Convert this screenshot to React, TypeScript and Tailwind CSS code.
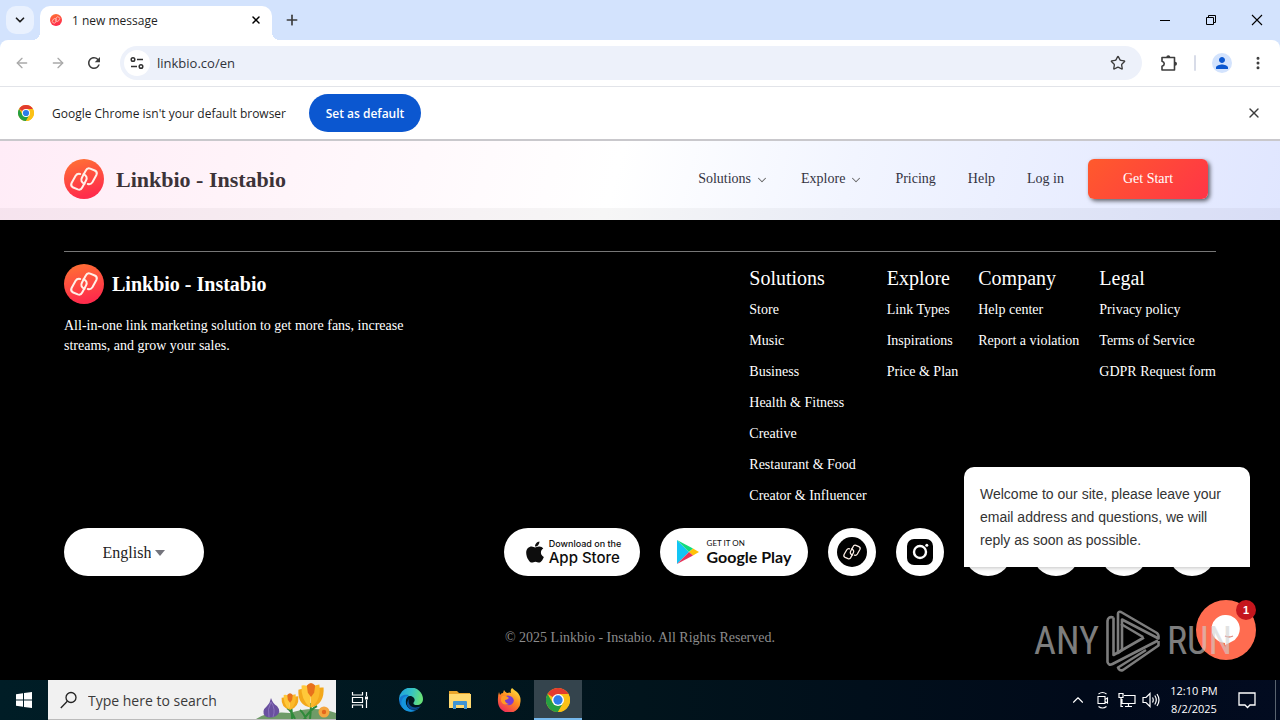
import React from "react";
import { ArrowLeft, ArrowRight, ChevronDown, ChevronUp, EllipsisVertical, Plus, Star, X } from "lucide-react";
import { FaApple } from "react-icons/fa";
import { MdPerson, MdRefresh } from "react-icons/md";

const UI = "font-['Open_Sans','Noto_Sans',sans-serif]";
const SERIF = "font-['Liberation_Serif',serif]";

function LinkGlyph() {
  const half = "M20.500 24.800Q15.800 22.500 18 18.500L21.800 11.500Q23.200 8.600 26.200 9.600L30.800 11.500Q33.800 13 32.400 16L28.400 23.200Q26.800 25.800 23.800 25";
  return (
    <g fill="none" stroke="#fff0e8" strokeWidth="2" strokeLinecap="round" strokeLinejoin="round">
      <path d={half} />
      <path d={half} transform="rotate(180 20 20)" />
    </g>
  );
}

function LinkLogo({ className, id }: { className: string; id: string }) {
  return (
    <svg viewBox="0 0 40 40" className={className} aria-hidden="true">
      <defs>
        <linearGradient id={id} x1="0" y1="0" x2="0.25" y2="1">
          <stop offset="0" stopColor="#ff7433" />
          <stop offset="1" stopColor="#ff2c4b" />
        </linearGradient>
      </defs>
      <circle cx="20" cy="20" r="20" fill={`url(#${id})`} />
      <LinkGlyph />
    </svg>
  );
}

function ChromeLogo({ className }: { className: string }) {
  return (
    <svg viewBox="0 0 48 48" className={className} aria-hidden="true">
      <circle cx="24" cy="24" r="24" fill="#fbc116" />
      <path d="M24 24 3.200 12A24 24 0 0 1 44.800 12H24z" fill="#e33b2e" />
      <path d="M3.200 12A24 24 0 0 0 24 48L34.400 30 24 24 13.600 30z" fill="#269f42" />
      <path d="M24 48A24 24 0 0 0 44.800 12H24l10.400 18z" fill="#fbc116" />
      <circle cx="24" cy="24" r="12" fill="#fff" />
      <circle cx="24" cy="24" r="9.300" fill="#2d7de9" />
    </svg>
  );
}

function TabStrip() {
  return (
    <div className="flex h-10 items-end bg-[#d3e3fd]">
      <button aria-label="Search tabs" className="mb-1.5 ml-1.5 flex size-7 items-center justify-center rounded-[10px] bg-[#e9f1fe]">
        <ChevronDown className="size-3.5 text-[#1f1f1f]" strokeWidth={3} />
      </button>
      <div className="relative ml-1.5 flex h-[34px] w-[232px] items-center rounded-t-[10px] bg-white px-2.5">
        <span className="absolute bottom-0 -left-2 size-2 bg-[radial-gradient(circle_at_0_0,transparent_8px,white_8px)]" />
        <span className="absolute -right-2 bottom-0 size-2 bg-[radial-gradient(circle_at_100%_0,transparent_8px,white_8px)]" />
        <LinkLogo id="tabIcon" className="mb-1.5 size-3" />
        <span className="ml-2.5 flex-1 pb-1 text-[12px] text-[#1f1f1f]">1 new message</span>
        <button aria-label="Close tab" className="mb-1.5">
          <X className="size-3" strokeWidth={3} />
        </button>
      </div>
      <button aria-label="New tab" className="mb-3 ml-3">
        <Plus className="size-4 text-[#3c3c3c]" strokeWidth={2.5} />
      </button>
      <div className="ml-auto flex h-full items-center gap-[30px] pr-[15px]">
        <button aria-label="Minimize">
          <svg viewBox="0 0 16 16" className="size-4" fill="none" stroke="#000">
            <path d="M3 8.500h10" />
          </svg>
        </button>
        <button aria-label="Restore">
          <svg viewBox="0 0 16 16" className="size-4" fill="none" stroke="#000">
            <path d="M3.500 5.500h7v7h-7zM5.500 5.500v-2h7v7h-2" />
          </svg>
        </button>
        <button aria-label="Close">
          <svg viewBox="0 0 16 16" className="size-4" fill="none" stroke="#000" strokeWidth="1.100">
            <path d="M3 3l10 10M13 3L3 13" />
          </svg>
        </button>
      </div>
    </div>
  );
}

function Toolbar() {
  return (
    <div className="bg-[#d3e3fd]">
      <div className="flex h-[47px] items-center rounded-t-[8px] border-b border-[#e2e4e9] bg-white px-3.5">
        <button aria-label="Back">
          <ArrowLeft className="size-4 text-[#a9a9a9]" />
        </button>
        <button aria-label="Forward" className="ml-5">
          <ArrowRight className="size-4 text-[#a9a9a9]" />
        </button>
        <button aria-label="Reload" className="ml-[19px]">
          <MdRefresh className="size-[18px] text-[#3c3c3c]" />
        </button>
        <div className="ml-[17px] flex h-[34px] flex-1 items-center rounded-full bg-[#edf1fa] pr-4 pl-1">
          <button aria-label="Site information" className="flex size-[26px] items-center justify-center rounded-full bg-white">
            <svg viewBox="0 0 16 16" className="size-4" fill="none" stroke="#303030" strokeWidth="1.500">
              <circle cx="4" cy="4.500" r="1.800" />
              <path d="M8 4.500h6M2 11.500h6" />
              <circle cx="12" cy="11.500" r="1.800" />
            </svg>
          </button>
          <input
            aria-label="Address"
            defaultValue="linkbio.co/en"
            className="ml-[7px] min-w-0 flex-1 bg-transparent pt-0.5 text-[13px] text-[#30333a] outline-none"
          />
          <button aria-label="Bookmark">
            <Star className="size-4 text-[#3c3c3c]" />
          </button>
        </div>
        <button aria-label="Extensions" className="ml-[17px]">
          <svg viewBox="0 0 20 20" className="size-5" aria-hidden="true">
            <path
              d="M3 4.500h12.500V17H3v-3.800c3-.800 3-4.100 0-4.900z"
              fill="none"
              stroke="#3c3c3c"
              strokeWidth="1.600"
              strokeLinejoin="round"
            />
            <path d="M7.300 4.200a2 2 0 0 1 4 0zM16 8.700a2 2 0 0 1 0 4z" fill="#3c3c3c" />
          </svg>
        </button>
        <span className="ml-[15px] h-4 w-0.5 rounded bg-[#d8dce8]" />
        <button aria-label="Profile" className="ml-4 flex size-5 items-center justify-center rounded-full bg-[#d3e3fd]">
          <MdPerson className="size-[18px] text-[#0b57d0]" />
        </button>
        <button aria-label="Menu" className="ml-[18px]">
          <EllipsisVertical className="size-4 text-[#3c3c3c]" strokeWidth={2.5} />
        </button>
      </div>
    </div>
  );
}

function DefaultBrowserBar() {
  return (
    <div className="flex h-[52px] items-center bg-white px-[18px] text-[12px] text-[#1f1f1f]">
      <ChromeLogo className="size-4" />
      <span className="ml-[18px] w-[241px] pt-0.5">Google Chrome isn't your default browser</span>
      <button className="ml-4 h-[38px] w-28 rounded-full bg-[#0b57d0] pt-0.5 font-semibold text-white">Set as default</button>
      <button aria-label="Dismiss" className="ml-auto">
        <X className="size-4 text-[#3c3c3c]" />
      </button>
    </div>
  );
}

function SiteHeader() {
  return (
    <header
      className={`flex h-[81px] flex-col border-t-2 border-[#c9c8cc] bg-[linear-gradient(105deg,#ffecf7_0%,#fff3f9_18%,#ffffff_48%,#f2f5ff_66%,#e0e6ff_100%)] ${SERIF}`}
    >
      <div className="flex flex-1 items-center px-16 pt-2">
        <a href="#home" className="flex items-center gap-3">
          <LinkLogo id="headLogo" className="size-10" />
          <span className="pt-0.5 text-[22px] font-bold text-[#3c3338]">Linkbio - Instabio</span>
        </a>
        <div className="ml-auto flex items-center gap-6">
          <nav className="flex items-center gap-8 text-[14px] text-[#33333f]">
            <a href="#solutions" className="flex items-center gap-1">
              Solutions <ChevronDown className="mt-0.5 size-3.5 text-[#666]" strokeWidth={1.75} />
            </a>
            <a href="#explore" className="flex items-center gap-1">
              Explore <ChevronDown className="mt-0.5 size-3.5 text-[#666]" strokeWidth={1.75} />
            </a>
            <a href="#pricing">Pricing</a>
            <a href="#help">Help</a>
            <a href="#login">Log in</a>
          </nav>
          <button className="mr-2 h-10 w-[120px] rounded-md bg-[linear-gradient(135deg,#ff5a2c,#ff3547)] text-[14px] text-white shadow-[2px_2px_4px_#00000099]">
            Get Start
          </button>
        </div>
      </div>
      <div className="h-3 bg-[#00000009]" />
    </header>
  );
}

const columns = [
  {
    title: "Solutions",
    links: ["Store", "Music", "Business", "Health & Fitness", "Creative", "Restaurant & Food", "Creator & Influencer"],
  },
  { title: "Explore", links: ["Link Types", "Inspirations", "Price & Plan"] },
  { title: "Company", links: ["Help center", "Report a violation"] },
  { title: "Legal", links: ["Privacy policy", "Terms of Service", "GDPR Request form"] },
];

function SiteFooter() {
  return (
    <footer className={`flex-1 bg-black px-16 pt-[31px] text-white ${SERIF}`}>
      <div className="flex justify-between border-t border-[#777] pt-3">
        <div className="w-[360px]">
          <div className="flex items-center gap-2">
            <LinkLogo id="footLogo" className="size-10" />
            <span className="text-[20px] font-bold">Linkbio - Instabio</span>
          </div>
          <p className="mt-3 text-[14px] leading-5">
            All-in-one link marketing solution to get more fans, increase streams, and grow your sales.
          </p>
        </div>
        <div className="flex gap-5">
          {columns.map((c) => (
            <section key={c.title}>
              <h2 className="text-[20px] leading-7">{c.title}</h2>
              <ul className="mt-2 flex flex-col gap-[11px] text-[14px] leading-5">
                {c.links.map((l) => (
                  <li key={l}>
                    <a href="#footer">{l}</a>
                  </li>
                ))}
              </ul>
            </section>
          ))}
        </div>
      </div>
      <div className="mt-[22px] flex items-center justify-between">
        <label className="flex h-12 w-[140px] items-center justify-center gap-1 rounded-full bg-white pt-0.5 text-[16px] text-[#222]">
          <select aria-label="Language" className="field-sizing-content appearance-none bg-transparent outline-none">
            <option>English</option>
          </select>
          <svg viewBox="0 0 10 6" className="h-1.5 w-2.5" fill="#74747c" aria-hidden="true">
            <path d="M0 0h10L5 6z" />
          </svg>
        </label>
        <div className="flex gap-5 text-[#0d0d0d]">
          <a href="#appstore" className="flex h-12 w-[136px] items-center justify-center gap-0.5 rounded-full bg-white font-['Inter',sans-serif]">
            <FaApple className="size-6" />
            <span className="flex flex-col">
              <span className="text-[9px] leading-[11px] font-medium">Download on the</span>
              <span className="text-[15px] leading-[18px] font-medium">App Store</span>
            </span>
          </a>
          <a href="#googleplay" className="flex h-12 w-[148px] items-center justify-center gap-2 rounded-full bg-white font-['Lato',sans-serif]">
            <svg viewBox="0 0 22 24" className="h-6 w-[22px]" aria-hidden="true">
              <path d="M0 0v24L12 12z" fill="#12c5f5" />
              <path d="M0 0l16 8.500L12 12z" fill="#12dc7c" />
              <path d="M16 8.500l6 3.500-6 3.500L12 12z" fill="#ffc107" />
              <path d="M12 12l4 3.500L0 24z" fill="#e8345a" />
            </svg>
            <span className="flex flex-col">
              <span className="text-[8px] leading-[10px]">GET IT ON</span>
              <span className="text-[16px] leading-[18px] font-bold">Google Play</span>
            </span>
          </a>
          <a href="#linkbio" aria-label="Linkbio" className="flex size-12 items-center justify-center rounded-full bg-white">
            <svg viewBox="0 0 40 40" className="size-[30px]">
              <circle cx="20" cy="20" r="20" />
              <g transform="translate(3 3) scale(0.85)">
                <LinkGlyph />
              </g>
            </svg>
          </a>
          <a href="#instagram" aria-label="Instagram" className="flex size-12 items-center justify-center rounded-full bg-white">
            <svg viewBox="0 0 26 26" className="size-[26px]">
              <rect width="26" height="26" rx="7" />
              <circle cx="13" cy="13" r="6" fill="none" stroke="#fff" strokeWidth="2.400" />
              <circle cx="19.800" cy="6.300" r="1.500" fill="#fff" />
            </svg>
          </a>
          {["Facebook", "X", "YouTube", "TikTok"].map((n) => (
            <a key={n} href="#social" aria-label={n} className="size-12 rounded-full bg-white" />
          ))}
        </div>
      </div>
      <p className="mt-[52px] pb-7 text-center text-[14px] leading-5 text-[#8c8c8c]">© 2025 Linkbio - Instabio. All Rights Reserved.</p>
    </footer>
  );
}

function ChatWidget() {
  return (
    <>
      <div className="absolute right-[30px] bottom-[113px] h-[100px] w-[286px] rounded-t-[10px] bg-white px-4 pt-4 font-['Liberation_Sans',sans-serif] text-[14px] leading-[23px] text-[#333] shadow-[0_1px_4px_#00000040]">
        Welcome to our site, please leave your email address and questions, we will reply as soon as possible.
      </div>
      <button aria-label="Open chat" className="absolute right-6 bottom-5 flex size-[60px] items-center justify-center rounded-full bg-[#ff6c50]">
        <svg viewBox="0 0 28 30" className="h-[30px] w-7">
          <path d="M14 0a14 14 0 0 1 5 27l-6 3v-2A14 14 0 0 1 14 0z" fill="#fff" />
          <path d="M13 21q4 2 8 0" fill="none" stroke="#e08a80" strokeWidth="1.300" />
        </svg>
        <span className="absolute top-0 right-0 flex size-5 items-center justify-center rounded-full bg-[#c5161d] font-['Liberation_Sans',sans-serif] text-[11px] font-bold text-white">
          1
        </span>
      </button>
    </>
  );
}

function Watermark() {
  return (
    <div className="pointer-events-none absolute right-12 bottom-2 flex items-center gap-1.5 font-['Roboto_Condensed','Roboto',sans-serif] text-[38px] leading-[62px] text-[#d0d0d0] opacity-60">
      <span>ANY</span>
      <svg viewBox="0 0 56 62" className="h-[62px] w-14" fill="none" stroke="#d0d0d0" strokeWidth="2.600" strokeLinejoin="round" aria-hidden="true">
        <path d="M13 43V4q0-3 3-2l36 21q2 1.500 1.500 5.500L17 9.500V40l-4 3z" />
        <path d="M8.500 7.500Q3 6 2.500 11v41q1 4 5 2L53 30.500M8.500 7.500V45L39 27.500" />
        <path d="M53.500 31v4.500L18 60q-3.500 1.500-5-2.500l28-17.500M16 14l22 13" />
      </svg>
      <span>RUN</span>
    </div>
  );
}

function Crocus({ x, y, s }: { x: number; y: number; s: number }) {
  return (
    <g transform={`translate(${x} ${y}) scale(${s})`}>
      <path d="M-12-6q6-2 10 3l2 14q-13-2-12-17zM12-8q-6-1-10 4L0 11q13-3 12-19z" fill="#f3a81b" />
      <path d="M-9-10q8-2 9 9l-1 12Q-10 3-9-10z" fill="#ffc83a" />
      <path d="M8-11q-8 0-8 10v12Q10 4 8-11z" fill="#fbb92a" />
      <path d="M-4-10q4-5 8 0l-1 7-3 4-3-4z" fill="#e8711b" />
    </g>
  );
}

function Taskbar() {
  return (
    <div className={`flex h-10 items-center bg-[linear-gradient(90deg,#001d26,#01141c_50%,#010a1a_85%,#020b20)] text-white ${UI}`}>
      <button aria-label="Start" className="flex h-10 w-12 items-center justify-center">
        <svg viewBox="0 0 16 16" className="size-4" fill="#fff">
          <path d="M0 2.200l7-1v6.300H0zM8 1l8-1v7.500H8zM0 8.500h7v6.300l-7-1zM8 8.500h8V16l-8-1z" />
        </svg>
      </button>
      <label className="flex h-10 w-72 items-center border-b border-[#bbb] bg-[#f1f1f1] pl-3">
        <svg viewBox="0 0 18 18" className="size-[18px]" fill="none" stroke="#222" strokeWidth="1.300" aria-hidden="true">
          <circle cx="11" cy="6.500" r="5" />
          <path d="M7.300 10.200L.800 17" />
        </svg>
        <input
          aria-label="Search"
          placeholder="Type here to search"
          className="ml-2.5 w-0 flex-1 bg-transparent pt-0.5 text-[14px] outline-none placeholder:text-[#3a3a3a]"
        />
        <svg viewBox="0 0 80 38" className="h-[38px] w-20" aria-hidden="true">
          <path d="M0 38q12-8 34-6 24-8 46 0v6z" fill="#6f9b68" />
          <path d="M36 38q0-8-1-14M39 38q-4-9-8-11M48 38q7-10 13-13M54 38q1-9 1-16M50 38q-3-7-6-9" stroke="#2f8a3a" strokeWidth="2" fill="none" />
          <Crocus x={34} y={21} s={0.7} />
          <Crocus x={55} y={15} s={1.05} />
          <path d="M15 17q2 6 6 8 5 6-1 10-6 3-11 0-4-5 2-10 3-3 4-8z" fill="#69509f" />
          <path d="M15 21q-4 7-2 15M15 21q5 7 2 15" stroke="#8a72bd" fill="none" />
          <circle cx="68" cy="31" r="5.500" fill="#f4a640" />
          <circle cx="68" cy="31" r="2.200" fill="#e3661d" />
        </svg>
      </label>
      <button aria-label="Task view" className="flex h-10 w-12 items-center justify-center">
        <svg viewBox="0 0 18 18" className="size-[18px]" fill="none" stroke="#fff" strokeWidth="1.200">
          <path d="M1.500 1v3h10V1M1.500 17v-3h10v3M1.500 6.500h10v5h-10zM15.500 1v4M15.500 9v8" />
          <path d="M14 5.500h3v3h-3z" fill="#fff" stroke="none" />
        </svg>
      </button>
      <button aria-label="Edge" className="ml-0.5 flex h-10 w-[50px] items-center justify-center">
        <svg viewBox="0 0 24 24" className="size-6">
          <defs>
            <linearGradient id="edgeTop" x1="0" y1="0" x2="1" y2="0.200">
              <stop offset="0" stopColor="#1b9de2" />
              <stop offset="0.550" stopColor="#35c1c5" />
              <stop offset="1" stopColor="#66e07a" />
            </linearGradient>
          </defs>
          <path d="M0 12A12 12 0 0 1 24 11c0 4-3 6-6 6-4 0-4-2-3-3 2-3-1-6-4-6-6 0-10 5-11 4z" fill="url(#edgeTop)" />
          <path d="M0 12c1-5 6-6 10-5-4 2-6 10 1 14 5 2 9 0 11-3A12 12 0 0 1 0 12z" fill="#1578cf" />
          <path d="M9.500 8C4 12 7 23 16 23c-9 3-16-4-13-11 1-3 4-4.500 6.500-4z" fill="#1595dc" />
          <path d="M10 11c-2 6 4 11 12 7-4 5-13 5-14-2 0-2 1-4 2-5z" fill="#0d4d94" />
        </svg>
      </button>
      <button aria-label="File Explorer" className="flex h-10 w-12 items-center justify-center">
        <svg viewBox="0 0 22 20" className="h-5 w-[22px]">
          <path d="M0 1h8l2 2h11v5H0z" fill="#e9a52b" />
          <path d="M0 4h22v14H0z" fill="#ffd970" />
          <path d="M4 19v-7q0-1 1-1h12q1 0 1 1v7h-3v-4H7v4z" fill="#3f94d3" />
        </svg>
      </button>
      <button aria-label="Firefox" className="flex h-10 w-[50px] items-center justify-center">
        <svg viewBox="0 0 24 24" className="size-6">
          <defs>
            <linearGradient id="foxBody" x1="0.800" y1="0" x2="0.200" y2="1">
              <stop offset="0" stopColor="#ffe23c" />
              <stop offset="0.450" stopColor="#ff8a1f" />
              <stop offset="1" stopColor="#ee2360" />
            </linearGradient>
          </defs>
          <path d="M2 4l1 3q1-2 3-2l1-3q1 2 3 3 3-1 4 0-1-3 1-5 2 2 5 4 4 4 3.500 9A11 11 0 0 1 1 14Q.500 8 2 4z" fill="url(#foxBody)" />
          <path d="M7 9q4-3 8 0 3 3 1 6-3 4-8 1-3-3-1-7z" fill="#7a3bd1" />
          <path d="M5 8q4-1 7 2-2 2-4 2 0 3 4 4-6 2-8-3-.500-3 1-5z" fill="#ff9a24" />
        </svg>
      </button>
      <button aria-label="Chrome" className="flex h-10 w-12 items-center justify-center border-b-2 border-[#76b9ed] bg-[#34444d]">
        <ChromeLogo className="mt-0.5 size-6" />
      </button>
      <div className="ml-auto flex h-10 items-center">
        <button aria-label="Show hidden icons">
          <ChevronUp className="size-[18px]" strokeWidth={1.5} />
        </button>
        <svg viewBox="0 0 16 18" className="ml-2 h-[18px] w-4" fill="none" stroke="#fff" strokeWidth="1.100" aria-hidden="true">
          <path d="M3 5.500h7v7H3zM10 8.500l2.500-1.500v5L10 10.500M3.500 3q4-3 8 0M3.500 15.500q4 3 8 0" />
        </svg>
        <svg viewBox="0 0 18 16" className="ml-[7px] h-4 w-[18px]" fill="none" stroke="#fff" strokeWidth="1.200" aria-hidden="true">
          <path d="M6 3.500h11v8H4V7M10.500 11.500v3M7 14.500h7M1 1.500h4v4H1zM3 5.500v9h2" />
        </svg>
        <svg viewBox="0 0 18 16" className="ml-1.5 h-4 w-[18px]" fill="none" stroke="#fff" strokeWidth="1.200" aria-hidden="true">
          <path d="M1 5.500h3l4-4v13l-4-4H1zM10.500 5.500q1.500 2.500 0 5M12.800 3.500q3 4.500 0 9M15 2q4 6 0 12" />
        </svg>
        <div className="ml-2 w-[52px] text-center text-[11px] leading-[18px] whitespace-nowrap">
          12:10 PM
          <br />
          8/2/2025
        </div>
        <svg viewBox="0 0 18 18" className="ml-[18px] size-[18px]" fill="none" stroke="#fff" strokeWidth="1.300" aria-hidden="true">
          <path d="M1 2h16v12h-5l-2.500 2.500L7 14H1z" />
        </svg>
        <span className="ml-[19px] h-10 w-px bg-[#59636f]" />
        <span className="w-1" />
      </div>
    </div>
  );
}

export default function App() {
  return (
    <div className={`flex min-h-screen flex-col bg-white ${UI}`}>
      <TabStrip />
      <Toolbar />
      <DefaultBrowserBar />
      <main className="relative flex flex-1 flex-col">
        <SiteHeader />
        <SiteFooter />
        <ChatWidget />
        <Watermark />
      </main>
      <Taskbar />
    </div>
  );
}
